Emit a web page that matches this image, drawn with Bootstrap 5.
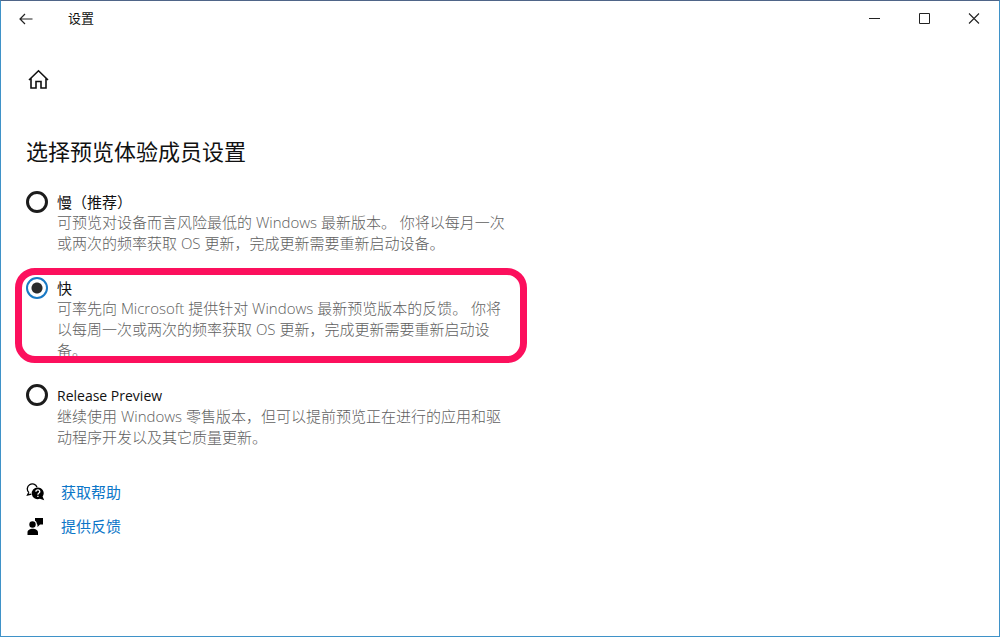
<!DOCTYPE html>
<html lang="zh-CN">
<head>
<meta charset="utf-8">
<meta name="viewport" content="width=device-width, initial-scale=1">
<title>设置</title>
<link href="https://cdn.jsdelivr.net/npm/bootstrap@5.3.0/dist/css/bootstrap.min.css" rel="stylesheet">
<style>
body{font-family:"Open Sans","Noto Sans CJK SC",sans-serif;font-size:15px;line-height:20px;color:#111;background:#fff}
.window{border:1px solid #3f92c8;border-top-color:#4f6588}
.titlebar{height:32px;font-size:13px}
.titlebar .btn{width:50px;height:32px;border-radius:0;color:#222}
.titlebar .caption{margin-left:17px;padding-top:2px}
.content{padding:35px 25px}
.home{width:24px;height:24px;color:#111}
.page-title{font-size:22px;line-height:32px;margin:43px 0 25px}
.options{max-width:487px}
.option{padding-left:31px;margin-bottom:24px}
.option .form-check-input{width:22px;height:22px;margin:-1px 0 0 -31px;border:3px solid #1c1c1c;background:none;box-shadow:none}
.option .form-check-input:checked{border-width:2px;border-color:#1979c4;background:radial-gradient(circle,#2b2b2b 5px,transparent 6px)}
.option p{color:#606060;font-weight:300;line-height:21px}
.latin-label{font-size:14px}
.highlight::after{content:"";position:absolute;inset:-10px -14px -2px -11px;border:7px solid #fc105d;border-radius:20px;pointer-events:none}
.help{gap:14px;padding-top:10px}
.help a{color:#0c76c8;text-decoration:none}
</style>
</head>
<body>
<div class="window min-vh-100">
  <header class="titlebar d-flex align-items-center">
    <button class="btn p-0" type="button" aria-label="返回"><svg width="14" height="12" viewBox="0 0 14 12" fill="none" stroke="currentColor" stroke-width="1.2"><path d="M13.5 6H1M6 1 1 6l5 5"/></svg></button>
    <span class="caption me-auto">设置</span>
    <button class="btn p-0" type="button" aria-label="最小化"><svg width="12" height="12" stroke="currentColor"><path d="M1 5.500h11"/></svg></button>
    <button class="btn p-0" type="button" aria-label="最大化"><svg width="12" height="12" fill="none" stroke="currentColor"><path d="M1.500.500h10v10h-10z"/></svg></button>
    <button class="btn p-0" type="button" aria-label="关闭"><svg width="12" height="12" stroke="currentColor" stroke-width="1.100"><path d="m1 .500 10 10M11 .500l-10 10"/></svg></button>
  </header>
  <main class="content">
    <button class="btn p-0 border-0 home d-flex" type="button" aria-label="主页"><svg width="24" height="24" fill="none" stroke="currentColor" stroke-width="1.600"><path d="m3 12 9.500-9.200L22 12M5 10.500V20h5v-6.500h5V20h5v-9.500"/></svg></button>
    <h1 class="page-title fw-normal">选择预览体验成员设置</h1>
    <form class="options">
      <div class="form-check option">
        <input class="form-check-input" type="radio" name="ring" id="slow">
        <label for="slow">慢（推荐）</label>
        <p class="mb-0">可预览对设备而言风险最低的 Windows 最新版本。 你将以每月一次或两次的频率获取 OS 更新，完成更新需要重新启动设备。</p>
      </div>
      <div class="form-check option highlight position-relative">
        <input class="form-check-input" type="radio" name="ring" id="fast" checked>
        <label for="fast">快</label>
        <p class="mb-0">可率先向 Microsoft 提供针对 Windows 最新预览版本的反馈。 你将以每周一次或两次的频率获取 OS 更新，完成更新需要重新启动设备。</p>
      </div>
      <div class="form-check option">
        <input class="form-check-input" type="radio" name="ring" id="preview">
        <label class="latin-label" for="preview">Release Preview</label>
        <p class="mb-0">继续使用 Windows 零售版本，但可以提前预览正在进行的应用和驱动程序开发以及其它质量更新。</p>
      </div>
    </form>
    <nav class="help d-flex flex-column">
      <a href="#" class="d-flex align-items-center"><svg class="me-3" width="19" height="19" viewBox="0 0 19 19"><path d="M2.800 9.500A5 5 0 1 1 11 4.200M2.900 9.200 1.500 12l3.800-.9" fill="none" stroke="#000" stroke-width="1.300"/><path d="M11.700 4.500a6 5.800 0 0 1 4.900 9.100l1.600 3.600-4.300-1.500a6 5.800 0 1 1-2.200-11.200z" fill="#000"/><path d="M9.900 8.700c0-2.500 3.900-2.500 3.900 0 0 1.400-1.900 1.300-1.900 3M11.900 12.700v1.400" fill="none" stroke="#fff" stroke-width="1.300"/></svg>获取帮助</a>
      <a href="#" class="d-flex align-items-center"><svg class="me-3" width="19" height="19" viewBox="0 0 19 19"><circle cx="6.500" cy="7.500" r="3.200"/><path d="M1.500 18v-2.500c0-5 10.500-5 10.500 0V18zM9 1h8v6.500h-3L11.500 10V7.500H11C10.800 5.500 10.200 4.500 9 3.800z"/></svg>提供反馈</a>
    </nav>
  </main>
</div>
<script src="https://cdn.jsdelivr.net/npm/bootstrap@5.3.0/dist/js/bootstrap.bundle.min.js"></script>
</body>
</html>
